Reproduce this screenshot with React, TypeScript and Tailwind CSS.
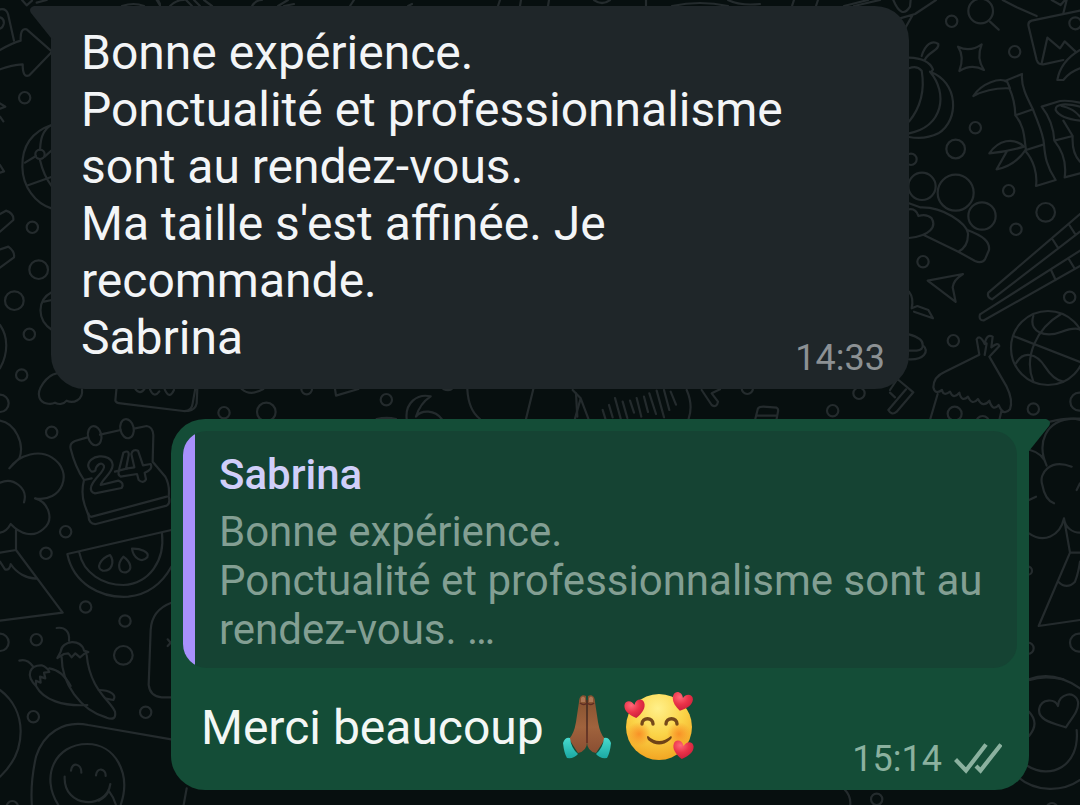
type Circle = [number, number, number];

function Circles({ items }: { items: Circle[] }) {
  return (
    <>
      {items.map(([x, y, r]) => (
        <circle key={`${x}-${y}`} cx={x} cy={y} r={r} />
      ))}
    </>
  );
}

function Wallpaper() {
  return (
    <svg
      aria-hidden="true"
      viewBox="0 0 1080 805"
      preserveAspectRatio="xMidYMid slice"
      className="absolute inset-0 h-full w-full"
      fill="none"
      stroke="#242b2d"
      strokeWidth="6.6"
      strokeLinecap="round"
      strokeLinejoin="round"
    >
      {/* top edge */}
      <g strokeWidth="2.2">
        <path d="M122 6Q134 2 144 6M158 0L160 4M170 6Q176 0 184 0M186 0L192 6M194 0L200 6M204 0L212 6M252 6Q256 0 262 0M278 6L288 0M284 6L294 4M350 6L354 0M408 6L412 4M498 6L500 0M520 6L521 0M548 6L549 0M594 0Q602 6 610 0M646 6V0M672 6Q700 0 728 6M728 0Q740 6 760 4M792 6L794 0M816 6L818 0M844 6L868 0M854 6L880 0" />
      </g>

      {/* top left: tag, arrow, globe, clouds */}
      <g transform="scale(.33333)">
        <path d="M0 28Q18 24 24 42L42 122M0 52Q14 56 11 72Q8 84 0 86" />
        <path d="M0 150Q35 130 62 122Q60 82 80 88L156 155L88 226Q68 236 68 193Q35 195 0 208" />
        <path d="M66 0L80 16L96 2M110 8L140 0M470 0L480 16" />
        <path d="M0 310L16 320L0 326M0 350L10 364M0 495L12 514L0 518" />
        <path d="M156 374C95 395 66 440 67 500C68 560 105 610 156 626M156 374C120 395 122 430 120 450M75 488L108 468M134 470L156 450M120 480Q130 525 156 560M84 556L156 530" />
        <path d="M0 642L18 632Q42 640 40 660L0 695M0 748L25 740Q45 755 42 772L0 803" />
        <path d="M156 876C110 900 110 960 156 990M132 905L156 900M0 975C25 1010 25 1060 0 1105" />
        <Circles items={[[74, 293, 17], [120, 463, 14], [97, 682, 17], [116, 809, 28], [43, 902, 28], [88, 1003, 17], [65, 1125, 17]]} />
      </g>

      {/* left: calendar, tree, melon, peppers, smiley */}
      <g transform="translate(0 380) scale(.33333)">
        <path d="M170 -20C140 -15 110 30 118 52C125 74 155 74 165 68C178 75 192 72 200 62C220 72 250 60 246 28" />
        <path d="M350 20L346 62Q350 70 362 70L550 93Q575 95 578 70L586 25M592 25L590 70Q586 90 565 93" />
        <path d="M404 24Q420 48 434 26M450 28Q462 56 478 34M494 28Q508 60 522 30" />
        <path d="M262 172L225 183Q208 190 212 206Q225 260 252 300Q242 340 254 375L265 405Q266 434 288 432L500 377Q512 370 506 350Q510 315 496 290L458 245L460 165Q458 140 440 138L402 146M300 164L362 150M252 300L275 295M276 410L500 350M265 400Q268 412 276 410M345 275L382 265" />
        <ellipse cx="284" cy="167" rx="20" ry="29" transform="rotate(-12 284 167)" />
        <ellipse cx="381" cy="146" rx="20" ry="29" transform="rotate(-12 381 146)" />
        <path d="M265 260C260 225 335 215 338 255C338 280 305 298 302 315L355 302Q374 308 365 324L285 340Q268 335 274 318C285 290 315 275 312 258C305 242 288 255 286 272Q272 282 265 260Z" />
        <path d="M370 218Q388 208 386 226L378 266L403 262L394 222Q398 206 414 212L429 256L452 252Q460 268 434 278L438 298Q430 312 416 300L411 282L362 290Q352 284 357 270Z" />
        <path d="M0 122C45 130 75 190 58 235L28 265C60 220 120 210 155 232C225 275 185 370 105 355C145 365 165 420 130 447C100 475 60 462 32 432Q20 455 0 458M0 308C40 290 85 325 72 367M48 450V510L188 698L0 722M0 518L48 510M0 545L15 568Q30 572 32 552C50 580 80 595 108 596" />
        <path d="M514 450L202 522C220 610 300 655 385 650Q470 640 514 560M238 518C250 580 310 615 370 615C450 610 495 540 486 460" />
        <path d="M330 525C302 535 285 565 308 572C335 575 345 545 330 525ZM370 530C350 552 355 580 378 577C400 570 392 545 370 530ZM396 506C400 535 425 550 442 532C450 515 420 505 396 506Z" />
        <path d="M170 744C195 740 210 755 207 782M172 834L182 815C185 780 245 775 252 812L265 816L252 822L240 832L226 820L215 832L205 820L192 822ZM185 832C185 910 240 990 320 1013Q350 1024 345 995C330 960 270 930 260 825" />
        <path d="M58 842Q80 835 98 858M108 918C75 885 90 855 125 856Q142 862 148 876L132 878L136 895L120 890L122 908L108 902V918C130 960 190 980 262 975M148 865C180 870 200 895 212 918M296 930C330 930 352 945 340 960L318 956" />
        <path d="M514 668Q455 690 452 750L446 915Q450 950 485 952H514M503 778L512 788L503 798M0 930C80 990 85 1110 0 1190" />
        <path d="M96 1280Q90 1210 108 1130C130 1060 190 1020 265 1035L514 1078M175 1275C120 1190 165 1092 262 1092C345 1092 395 1180 362 1275M213 1172C215 1145 245 1150 244 1178M288 1186C290 1160 318 1165 317 1188M194 1190C190 1285 320 1290 331 1212M296 1262Q320 1250 326 1232Q340 1250 348 1275M560 1225L550 1280" />
        <Circles items={[[155, 157, 17], [197, 455, 17], [138, 520, 17], [257, 681, 17], [375, 723, 17], [370, 826, 28], [109, 779, 17], [0, 787, 26], [100, 1010, 17], [437, 997, 17], [37, 1280, 17], [0, 70, 26]]} />
      </g>

      {/* top right: fruit, spark, picture, bamboo */}
      <g transform="translate(890 0) scale(.33333)">
        <path d="M10 0Q35 60 60 20L62 0M30 55L75 42L138 0M45 85L68 45M300 65L326 89M338 0L380 22L440 48M530 0L520 40M485 0L512 15L525 0" />
        <path d="M204 140Q240 158 275 133Q258 175 282 210Q245 190 208 213Q224 170 204 140Z" />
        <path d="M570 32L425 62Q412 66 416 80L440 180Q445 195 460 193L520 180M455 190L472 113L510 145L524 124L556 154" />
        <path d="M57 173Q115 175 129 208L125 215M57 205Q80 195 95 212Q110 300 57 365M95 168C105 135 125 118 145 132C150 150 115 155 104 180M57 400C160 380 175 280 120 215C205 245 210 360 145 400Q105 420 57 411" />
        <path d="M250 288C275 250 330 230 352 246L360 265Q300 262 250 288ZM345 243L396 222C392 260 415 300 429 328L376 346C375 310 365 280 358 265M376 346C405 380 402 415 408 450L462 433C460 400 440 360 429 328M408 455C430 480 443 520 438 558L497 540C470 500 465 470 462 433" />
        <path d="M298 460C325 420 370 410 402 440Q350 455 298 460ZM350 455L320 508C365 500 390 475 408 448" />
        <path d="M493 422Q490 365 455 320L510 303Q535 300 570 308M520 362L548 408L493 422C520 455 530 490 524 532L570 520M548 408Q545 460 570 485M570 320C530 310 495 310 497 330Q510 355 570 362M515 318Q550 325 570 350M502 240C510 195 535 170 570 150M502 240L520 240Q540 215 570 205" />
        <Circles items={[[272, 33, 37], [185, 64, 17], [374, 155, 17], [556, 70, 18], [256, 383, 17], [197, 447, 28], [63, 478, 17], [96, 559, 41], [197, 578, 54], [356, 572, 17]]} />
      </g>

      {/* right: rocket, plane, chopsticks, ball, dessert */}
      <g transform="translate(890 200) scale(.33333)">
        <path d="M57 10L90 22Q140 20 185 48Q230 75 234 100C235 130 225 145 205 155L103 106M57 28Q78 25 85 48Q110 40 125 55C140 80 120 108 57 114M205 155L255 183Q275 192 285 178L297 150C300 125 280 108 232 90" />
        <path d="M113 242L219 222Q190 240 188 262L197 306ZM57 275Q72 295 65 325L82 318L115 330L129 355L72 335M57 403Q100 415 98 435C120 455 100 480 57 478M57 452H80Q100 450 98 435" />
        <path d="M570 42L295 278Q290 292 306 298L570 95M489 120L505 145M538 75L556 103M570 152L270 343Q265 362 282 361L570 198M482 208L497 240M537 178L553 204" />
        <circle cx="474" cy="444" r="111" />
        <path d="M513 342C440 385 400 470 430 545M430 348C415 395 465 415 515 395Q550 382 570 388M370 408L570 486M378 490C400 450 440 460 465 500Q490 540 520 545" />
        <path d="M268 464L260 418Q270 402 284 432Q290 400 308 410L304 442Q325 425 328 438L300 468M284 465L290 430M268 464L165 515Q130 530 130 562Q135 585 156 570Q160 590 180 575Q190 600 208 578Q215 608 234 590Q246 618 264 597Q278 625 298 602Q308 636 326 615Q340 650 360 628Q370 600 350 560L298 470M143 582L120 660M335 630L328 660" />
        <path d="M0 570L22 537L70 577L20 635Q5 648 -5 630L48 568M0 578L15 592M480 665Q540 650 570 660" />
        <Circles items={[[276, 48, 41], [467, 37, 28], [378, 88, 17], [99, 185, 17], [539, 292, 17], [190, 422, 17], [430, 627, 17], [568, 605, 27], [194, 641, 21], [278, 668, 20]]} />
      </g>

      {/* strip between the messages */}
      <g transform="translate(180 370) scale(.33333)">
        <path d="M185 57Q210 80 250 57M465 57L468 77L535 57M790 57Q805 64 815 57M680 147C675 100 710 70 752 79Q720 100 708 140C725 118 765 120 785 147M590 147Q620 140 648 147M862 57Q865 120 900 147M1060 57L1038 147M1188 70L1192 140" />
        <Circles items={[[132, 128, 17], [259, 126, 28], [380, 57, 16], [619, 89, 17]]} />
      </g>
      <g transform="translate(560 330) scale(.33333)">
        <path d="M38 180L62 205L45 266M62 205L85 266M128 240L136 266M147 225L158 262M165 204L182 266M188 215L202 264M210 212L222 248M230 204L244 260M252 200L264 246M268 190L288 252M290 182L312 262M312 180L328 240M332 185L348 224M380 180Q400 225 386 266M425 180L455 225Q470 235 474 215L455 190L480 178M586 266L594 235Q598 230 610 230L650 233Q656 236 654 245L650 266M590 257H650" />
        <Circles items={[[562, 175, 17], [818, 242, 17], [897, 190, 17]]} />
      </g>

      {/* bottom right: tree, mountain, heart smiley */}
      <g transform="translate(960 400) scale(.33333)">
        <path d="M210 150Q250 160 260 197C230 130 255 60 340 56H360M335 200C270 175 235 220 247 255Q255 300 282 310M360 250L350 270M207 300L228 290M207 400C250 430 300 410 312 355C315 385 340 398 360 398M312 355L330 458L236 678L360 660M330 458H360M295 545Q320 570 345 545Q355 520 360 485M210 840Q250 825 310 838" />
        <Circles items={[[204, 512, 12], [204, 745, 17], [357, 728, 27]]} />
      </g>
      <g transform="translate(840 660) scale(.33333)">
        <path d="M567 58Q640 30 720 85M530 348C590 400 670 395 720 360M567 155Q600 190 567 228M563 318C630 360 720 320 710 210M678 202C640 190 590 180 598 145C605 115 645 115 654 138C655 100 705 90 714 125C718 155 690 180 678 202ZM15 390Q35 410 30 440" />
        <Circles items={[[110, 418, 17], [636, 445, 16]]} />
      </g>
    </svg>
  );
}

function FoldedHands() {
  return (
    <svg role="img" aria-label="Mains jointes" viewBox="0 0 50 66" className="h-[66px] w-[50px]">
      <defs>
        <linearGradient id="skin" x1="0" y1="0" x2="0" y2="1">
          <stop offset="0" stopColor="#84502f" />
          <stop offset=".55" stopColor="#a0633d" />
          <stop offset="1" stopColor="#8a4e32" />
        </linearGradient>
        <linearGradient id="cuff" x1="0" y1="0" x2="0" y2="1">
          <stop offset="0" stopColor="#48dace" />
          <stop offset="1" stopColor="#1ba9a3" />
        </linearGradient>
      </defs>
      <path d="M24 2C20 0 17 3 17 8L14 28Q12 40 7 45L16 59Q25 57 25 48Z" fill="url(#skin)" />
      <path d="M26 2C30 0 33 3 33 8L36 28Q38 40 43 45L34 59Q25 57 25 48Z" fill="url(#skin)" />
      <path d="M25 6V49M18 9Q22 12 25 9Q29 12 32 9" fill="none" stroke="#5f2d22" strokeWidth="1.5" />
      <path d="M19 4Q21 1 23 4V8H19ZM27 4Q29 1 31 4V8H27Z" fill="#ad7655" />
      <path d="M8 44Q3 43 1 49Q2 59 5 64Q12 65 16 60Q9 54 8 44Z" fill="url(#cuff)" />
      <path d="M42 44Q47 43 49 49Q48 59 45 64Q38 65 34 60Q41 54 42 44Z" fill="url(#cuff)" />
    </svg>
  );
}

function HeartFace() {
  const heart = "M0 9C-7 5-11 0-10-5C-9-10-2-10 0-4C2-10 9-10 10-5C11 0 7 5 0 9Z";
  return (
    <svg role="img" aria-label="Visage souriant avec des cœurs" viewBox="0 0 70 70" className="size-[70px]">
      <defs>
        <radialGradient id="face" cx=".48" cy=".22" r=".8">
          <stop offset="0" stopColor="#fff08a" />
          <stop offset=".5" stopColor="#fbd448" />
          <stop offset="1" stopColor="#f2a321" />
        </radialGradient>
        <radialGradient id="blush">
          <stop offset="0" stopColor="#f98b24" stopOpacity=".9" />
          <stop offset="1" stopColor="#f98b24" stopOpacity="0" />
        </radialGradient>
        <radialGradient id="heart" cx=".35" cy=".25" r=".8">
          <stop offset="0" stopColor="#ff6878" />
          <stop offset=".5" stopColor="#ea3349" />
          <stop offset="1" stopColor="#c91d3a" />
        </radialGradient>
      </defs>
      <circle cx="35" cy="35" r="33" fill="url(#face)" />
      <circle cx="15" cy="42" r="12" fill="url(#blush)" />
      <circle cx="55" cy="42" r="12" fill="url(#blush)" />
      <path d="M18 32C18 25 29 25 29 32M42 32C42 25 53 25 53 32" fill="none" stroke="#75491a" strokeWidth="3.4" strokeLinecap="round" />
      <path d="M24 44Q35 54 47 44Q49 45 46 48Q35 57 24 48Q22 44 24 44Z" fill="#6e4217" />
      <path d={heart} transform="translate(11 17) rotate(-8)" fill="url(#heart)" />
      <path d={heart} transform="translate(58 10) rotate(14)" fill="url(#heart)" />
      <path d={heart} transform="translate(59 58) rotate(8)" fill="url(#heart)" />
    </svg>
  );
}

function ReadTicks() {
  return (
    <svg role="img" aria-label="Distribué" viewBox="0 0 48 32" className="h-8 w-12" fill="none" stroke="#8bb19f" strokeWidth="4.2">
      <path d="M1.500 16.500L12 27.500L32 1.500M22 23L26.500 27.500L47 1.500" />
    </svg>
  );
}

export default function App() {
  return (
    <main className="relative flex min-h-screen flex-col gap-[30px] overflow-hidden bg-[#070f0f] px-[51px] pt-1.5 pb-[15px] font-['Roboto',sans-serif]">
      <Wallpaper />

      <article className="relative mr-[120px] grid rounded-b-[34px] rounded-tr-[34px] bg-[#1f2629] pt-[18px] pr-6 pb-2.5 pl-[30px]">
        <svg aria-hidden="true" viewBox="0 0 24 34" className="absolute top-0 -left-[21px] h-[34px] w-6" fill="#1f2629">
          <path d="M24 0H4Q-2 2 1 7L21 32L24 34Z" />
        </svg>
        <p className="col-start-1 row-start-1 pb-[13px] text-[48px] leading-[57px] text-[#f3f5f7]">
          Bonne expérience.
          <br />
          Ponctualité et professionnalisme sont au rendez-vous.
          <br />
          Ma taille s'est affinée. Je recommande.
          <br />
          Sabrina
        </p>
        <time className="col-start-1 row-start-1 self-end justify-self-end text-[36px] leading-[42px] text-[#8c9194]">14:33</time>
      </article>

      <article className="relative ml-[120px] rounded-b-[34px] rounded-tl-[34px] bg-[#144d37] p-3 pb-2.5">
        <svg aria-hidden="true" viewBox="0 0 24 34" className="absolute top-0 -right-[21px] h-[34px] w-6" fill="#144d37">
          <path d="M0 0H20Q26 2 23 7L3 32L0 34Z" />
        </svg>
        <blockquote className="flex overflow-hidden rounded-3xl bg-[#154333]">
          <span className="w-3 shrink-0 bg-[#a791fc]" />
          <div className="px-6 pt-[19px] pb-3.5 text-[42px] leading-[49px]">
            <cite className="block pb-2 font-medium text-[#d0cffa] not-italic">Sabrina</cite>
            <p className="text-[#839f93]">
              Bonne expérience.
              <br />
              Ponctualité et professionnalisme sont au rendez-vous. …
            </p>
          </div>
        </blockquote>
        <div className="grid pt-6 pr-[15px] pl-[18px]">
          <div className="col-start-1 row-start-1 flex items-center gap-3 pb-[18px] text-[48px] leading-[57px] text-[#f3f7f5]">
            <p className="pr-1.5">Merci beaucoup</p>
            <FoldedHands />
            <HeartFace />
          </div>
          <div className="col-start-1 row-start-1 flex items-center gap-3 self-end justify-self-end text-[36px] leading-[42px] text-[#8bb19f]">
            <time>15:14</time>
            <ReadTicks />
          </div>
        </div>
      </article>
    </main>
  );
}
